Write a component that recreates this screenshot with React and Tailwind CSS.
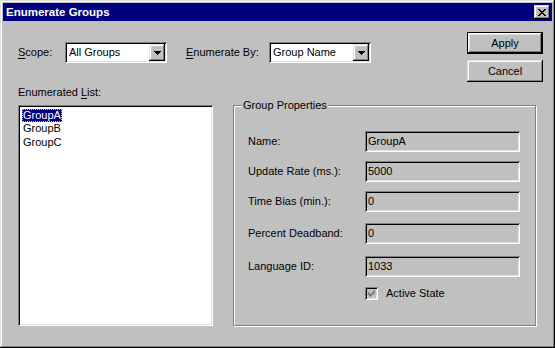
import React from 'react';

const raised = 'shadow-[inset_-1px_-1px_#000,inset_1px_1px_#dfdfdf,inset_-2px_-2px_#808080,inset_2px_2px_#fff]';
const sunken = 'shadow-[inset_1px_1px_#808080,inset_-1px_-1px_#fff,inset_2px_2px_#000,inset_-2px_-2px_#dfdfdf]';

function DownArrow() {
    return (
        <svg width="7" height="4" viewBox="0 0 7 4" shapeRendering="crispEdges">
            <path d="M0 0h7v1H0zM1 1h5v1H1zM2 2h3v1H2zM3 3h1v1H3z" fill="#000" />
        </svg>
    );
}

function Combo({ value, className = '' }) {
    return (
        <div className={`flex h-[21px] w-[102px] items-center bg-white p-[2px] ${sunken} ${className}`}>
            <span className="flex-1 pl-[2px] leading-[13px]">{value}</span>
            <div className={`flex h-[17px] w-[16px] items-center justify-center bg-[#c0c0c0] ${raised}`}>
                <DownArrow />
            </div>
        </div>
    );
}

function Field({ value }) {
    return (
        <div className={`flex h-[21px] w-[155px] items-center bg-[#c0c0c0] pl-[3px] ${sunken}`}>
            <span className="leading-[13px]">{value}</span>
        </div>
    );
}

function PropRow({ label, value, className = '' }) {
    return (
        <div className={`flex items-center ${className}`}>
            <span className="w-[117px] leading-[13px]">{label}</span>
            <Field value={value} />
        </div>
    );
}

export default function App() {
    return (
        <div
            className="flex h-[348px] w-[555px] flex-col bg-[#c0c0c0] p-[3px] text-[11px] text-black shadow-[inset_-1px_-1px_#000,inset_1px_1px_#dfdfdf,inset_-2px_-2px_#808080,inset_2px_2px_#fff]"
            style={{ fontFamily: '"Liberation Sans", Arial, sans-serif' }}
        >
            {/* title bar */}
            <div className="flex h-[18px] items-center bg-[#000080] pl-[3px] pr-[2px]">
                <span className="text-[11.5px] font-bold leading-[14px] text-white">Enumerate Groups</span>
                <div className={`ml-auto flex h-[14px] w-[16px] items-center justify-center bg-[#c0c0c0] ${raised}`}>
                    <svg width="8" height="7" viewBox="0 0 8 7" shapeRendering="crispEdges">
                        <path
                            d="M0 0h2v1H0zM6 0h2v1H6zM1 1h2v1H1zM5 1h2v1H5zM2 2h4v1H2zM3 3h2v1H3zM2 4h4v1H2zM1 5h2v1H1zM5 5h2v1H5zM0 6h2v1H0zM6 6h2v1H6z"
                            fill="#000"
                        />
                    </svg>
                </div>
            </div>

            <div className="flex flex-1 flex-col pl-[15px]">
                {/* top row */}
                <div className="flex items-start">
                    <div className="mt-[21px] flex items-center">
                        <span className="w-[47px] leading-[13px]">
                            <u className="underline-offset-2">S</u>cope:
                        </span>
                        <Combo value="All Groups" />
                        <span className="ml-[19px] w-[83px] leading-[13px]">
                            <u className="underline-offset-2">E</u>numerate By:
                        </span>
                        <Combo value="Group Name" />
                    </div>
                    <div className="ml-auto mr-[9px] mt-[11px] flex flex-col gap-[6px]">
                        <button className="h-[22px] w-[76px] border border-black bg-[#c0c0c0] leading-[13px] shadow-[inset_-1px_-1px_#000,inset_1px_1px_#fff,inset_-2px_-2px_#808080,inset_2px_2px_#dfdfdf]">
                            Apply
                        </button>
                        <button className={`h-[22px] w-[76px] bg-[#c0c0c0] leading-[13px] ${raised}`}>Cancel</button>
                    </div>
                </div>

                <div className="mt-[4px] leading-[13px]">
                    Enumerated <u className="underline-offset-2">L</u>ist:
                </div>

                {/* main row */}
                <div className="mt-[6px] flex">
                    <div className={`h-[221px] w-[195px] bg-white px-[4px] py-[2px] ${sunken}`}>
                        <div className="h-[14px]">
                            <span className="inline-block h-[13px] bg-[#000080] px-[1px] leading-[13px] text-white outline outline-1 outline-dotted outline-[#c0c0c0] -outline-offset-1">
                                GroupA
                            </span>
                        </div>
                        <div className="h-[14px] px-[1px] leading-[14px]">GroupB</div>
                        <div className="h-[14px] px-[1px] leading-[14px]">GroupC</div>
                    </div>

                    <div className="relative ml-[20px] h-[221px] w-[303px] border border-[#808080] pl-[14px] shadow-[inset_1px_1px_#fff,1px_1px_#fff]">
                        <span className="absolute -top-[7px] left-[8px] bg-[#c0c0c0] px-[1px] leading-[13px]">
                            Group Properties
                        </span>
                        <PropRow className="mt-[25px]" label="Name:" value="GroupA" />
                        <PropRow className="mt-[9px]" label="Update Rate (ms.):" value="5000" />
                        <PropRow className="mt-[9px]" label="Time Bias (min.):" value="0" />
                        <PropRow className="mt-[11px]" label="Percent Deadband:" value="0" />
                        <PropRow className="mt-[12px]" label="Language ID:" value="1033" />
                        <div className="ml-[117px] mt-[10px] flex items-center">
                            <div className={`flex h-[13px] w-[13px] items-center justify-center bg-[#c0c0c0] ${sunken}`}>
                                <svg width="7" height="7" viewBox="0 0 7 7" shapeRendering="crispEdges">
                                    <path d="M6 0h1v3H6zM5 1h1v3H5zM4 2h1v3H4zM3 3h1v3H3zM2 4h1v3H2zM1 3h1v3H1zM0 2h1v3H0z" fill="#808080" />
                                </svg>
                            </div>
                            <span className="ml-[8px] leading-[13px]">Active State</span>
                        </div>
                    </div>
                </div>
            </div>
        </div>
    );
}
